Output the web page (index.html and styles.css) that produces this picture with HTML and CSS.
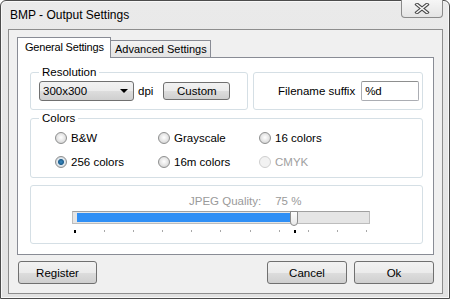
FILE: index.html
```html
<!DOCTYPE html>
<html lang="en">
<head>
  <meta charset="UTF-8">
  <title>BMP - Output Settings</title>
  <link rel="stylesheet" href="styles.css">
</head>
<body>
  <div class="window">
    <div class="titlebar">
      <span class="title">BMP - Output Settings</span>
      <span class="close">
        <svg width="16" height="11" viewBox="0 0 16 11">
          <path d="M3 1.5 L13 9.5 M13 1.5 L3 9.5" stroke="#4a4a4a" stroke-width="3.6" stroke-linecap="square"/>
          <path d="M3 1.5 L13 9.5 M13 1.5 L3 9.5" stroke="#fafafa" stroke-width="1.6" stroke-linecap="square"/>
        </svg>
      </span>
    </div>

    <div class="client">
      <div class="tabs">
        <div class="tab active">General Settings</div>
        <div class="tab">Advanced Settings</div>
      </div>

      <div class="page">
        <div class="row">
          <div class="group res">
            <div class="group-title">Resolution</div>
            <div class="res-line">
              <div class="select"><span>300x300</span><span class="arrow"></span></div>
              <span class="dpi">dpi</span>
              <button class="btn custom">Custom</button>
            </div>
          </div>
          <div class="group suffix">
            <span>Filename suffix</span>
            <input class="field" type="text" value="%d">
          </div>
        </div>

        <div class="group colors">
          <div class="group-title">Colors</div>
          <div class="radios">
            <label class="radio"><span class="dot"></span>B&amp;W</label>
            <label class="radio"><span class="dot"></span>Grayscale</label>
            <label class="radio"><span class="dot"></span>16 colors</label>
            <label class="radio"><span class="dot on"></span>256 colors</label>
            <label class="radio"><span class="dot"></span>16m colors</label>
            <label class="radio off"><span class="dot"></span>CMYK</label>
          </div>
        </div>

        <div class="group jpeg">
          <div class="quality"><span>JPEG Quality:</span><span>75 %</span></div>
          <div class="slider">
            <div class="fill"></div>
            <div class="thumb"></div>
          </div>
          <div class="ticks">
            <i class="mark"></i><i></i><i></i><i></i><i></i><i></i><i></i><i></i><i></i><i></i><i></i>
            <b class="pos"></b>
          </div>
        </div>
      </div>

      <div class="footer">
        <button class="btn wide">Register</button>
        <div class="right">
          <button class="btn wide">Cancel</button>
          <button class="btn wide">Ok</button>
        </div>
      </div>
    </div>
  </div>
</body>
</html>
```

FILE: styles.css
```css
* {
  box-sizing: border-box;
}
body {
  margin: 0;
  font-family: "Liberation Sans", Arial, sans-serif;
  font-size: 11px;
  color: #000;
}
.window {
  width: 450px;
  height: 299px;
  border: 1px solid #4c4c4c;
  border-radius: 6px 6px 0 0;
  background: linear-gradient(#eaeaea, #e2e2e2);
  box-shadow: inset 0 0 0 1px #f8f8f8;
  padding: 0 6px 4px 7px;
}
.titlebar {
  height: 28px;
  display: flex;
  align-items: flex-start;
  justify-content: space-between;
}
.title {
  font-size: 12px;
  margin: 7px 0 0 2px;
  color: #000;
}
.close {
  width: 42px;
  height: 18px;
  margin-top: -1px;
  border: 1px solid #8a8a8a;
  border-top: none;
  border-radius: 0 0 4px 4px;
  background: linear-gradient(#f6f6f6, #e4e4e4);
  display: flex;
  align-items: center;
  justify-content: center;
}
.client {
  height: 265px;
  border: 1px solid #8d8d8d;
  background: #f0f0f0;
  padding: 7px 8px 9px 8px;
}

/* tabs */
.tabs {
  display: flex;
  align-items: flex-end;
  height: 21px;
  margin-bottom: -1px;
  position: relative;
  z-index: 1;
}
.tab {
  height: 17px;
  margin-bottom: 1px;
  padding: 0 3px 0 4px;
  border: 1px solid #898c95;
  border-left: none;
  border-bottom: none;
  background: linear-gradient(#f3f3f3, #e3e3e3);
  line-height: 16px;
  font-size: 11px;
  white-space: nowrap;
}
.tab.active {
  height: 21px;
  margin-bottom: 0;
  width: 94px;
  padding: 0 0 0 7px;
  border-left: 1px solid #898c95;
  background: #fff;
  line-height: 18px;
  letter-spacing: -0.2px;
}
.page {
  height: 198px;
  border: 1px solid #898c95;
  background: #fff;
  padding: 14px 9px 0 12px;
}

/* group boxes */
.group {
  border: 1px solid #d5dfe5;
  border-radius: 3px;
}
.group-title {
  width: fit-content;
  margin: -8px 0 0 8px;
  padding: 0 3px;
  line-height: 14px;
  background: #fff;
  font-size: 11.5px;
}
.row {
  display: flex;
  gap: 5px;
}
.res {
  width: 218px;
  height: 38px;
}
.res-line {
  display: flex;
  align-items: center;
  margin: 2px 0 0 8px;
}
.select {
  width: 95px;
  height: 20px;
  border: 1px solid #707070;
  border-radius: 3px;
  background: linear-gradient(#f2f2f2 0%, #ebebeb 50%, #dddddd 51%, #cfcfcf 100%);
  display: flex;
  align-items: center;
  justify-content: space-between;
  padding: 0 5px 0 3px;
  font-size: 11.5px;
}
.arrow {
  width: 0;
  height: 0;
  border-left: 4px solid transparent;
  border-right: 4px solid transparent;
  border-top: 4px solid #000;
}
.dpi {
  margin-left: 4px;
  font-size: 11.5px;
}
.btn {
  font-family: inherit;
  font-size: 11.5px;
  color: #000;
  border: 1px solid #707070;
  border-radius: 3px;
  background: linear-gradient(#f2f2f2 0%, #ebebeb 50%, #dddddd 51%, #cfcfcf 100%);
  padding: 0;
}
.custom {
  width: 67px;
  height: 18px;
  margin-left: 10px;
}
.suffix {
  width: 170px;
  height: 38px;
  display: flex;
  align-items: center;
  padding-left: 24px;
  font-size: 11.5px;
}
.field {
  width: 58px;
  height: 20px;
  margin-left: 6px;
  border: 1px solid #abadb3;
  border-top-color: #8e8f8f;
  border-radius: 2px;
  padding: 0 3px;
  font-family: inherit;
  font-size: 11.5px;
}

/* colors */
.colors {
  width: 393px;
  height: 60px;
  margin-top: 8px;
}
.radios {
  display: grid;
  grid-template-columns: 103px 101px auto;
  grid-auto-rows: 24px;
  margin: 1px 0 0 24px;
}
.radio {
  display: flex;
  align-items: center;
  gap: 4px;
  font-size: 11.5px;
}
.radio.off {
  color: #a0a0a0;
}
.dot {
  width: 12px;
  height: 12px;
  border-radius: 50%;
  border: 1px solid #8e8f8f;
  background: radial-gradient(circle at 50% 45%, #ffffff 0%, #e6e6e6 50%, #c8c8c8 100%);
}
.dot.on {
  background: radial-gradient(circle, #3b8cc4 0, #1e5f8e 2.5px, #dfe8ef 3.5px, #c6c6c6 100%);
}
.radio.off .dot {
  border-color: #cfcfcf;
  background: #f2f2f2;
}

/* jpeg */
.jpeg {
  width: 393px;
  height: 59px;
  margin-top: 7px;
  padding-top: 8px;
}
.quality {
  display: flex;
  gap: 14px;
  padding-left: 158px;
  line-height: 14px;
  color: #9a9a9a;
  font-size: 11.5px;
}
.slider {
  position: relative;
  width: 298px;
  height: 13px;
  margin: 3px 0 0 41px;
  border: 1px solid #bdbdbd;
  border-top-color: #a0a0a0;
  background: #e5e5e5;
}
.fill {
  width: 214px;
  height: 9px;
  margin: 1px 0 0 4px;
  background: #2f8ff5;
}
.thumb {
  position: absolute;
  left: 217px;
  top: -1px;
  width: 8px;
  height: 15px;
  border: 1px solid #8c8c8c;
  border-radius: 1px 1px 4px 4px;
  background: linear-gradient(#fdfdfd, #e8e8e8);
}
.ticks {
  position: relative;
  display: flex;
  justify-content: space-between;
  width: 293px;
  margin: 6px 0 0 43px;
  height: 4px;
}
.ticks i {
  width: 1px;
  height: 2px;
  background: #a8a8a8;
}
.ticks i.mark,
.pos {
  background: #000;
  width: 2px;
  height: 3px;
}
.pos {
  position: absolute;
  left: 220px;
  top: 0;
}

/* footer */
.footer {
  display: flex;
  justify-content: space-between;
  margin-top: 6px;
  padding-left: 1px;
}
.right {
  display: flex;
  gap: 7px;
}
.wide {
  width: 80px;
  height: 23px;
}
.footer > .wide {
  width: 79px;
}
```
